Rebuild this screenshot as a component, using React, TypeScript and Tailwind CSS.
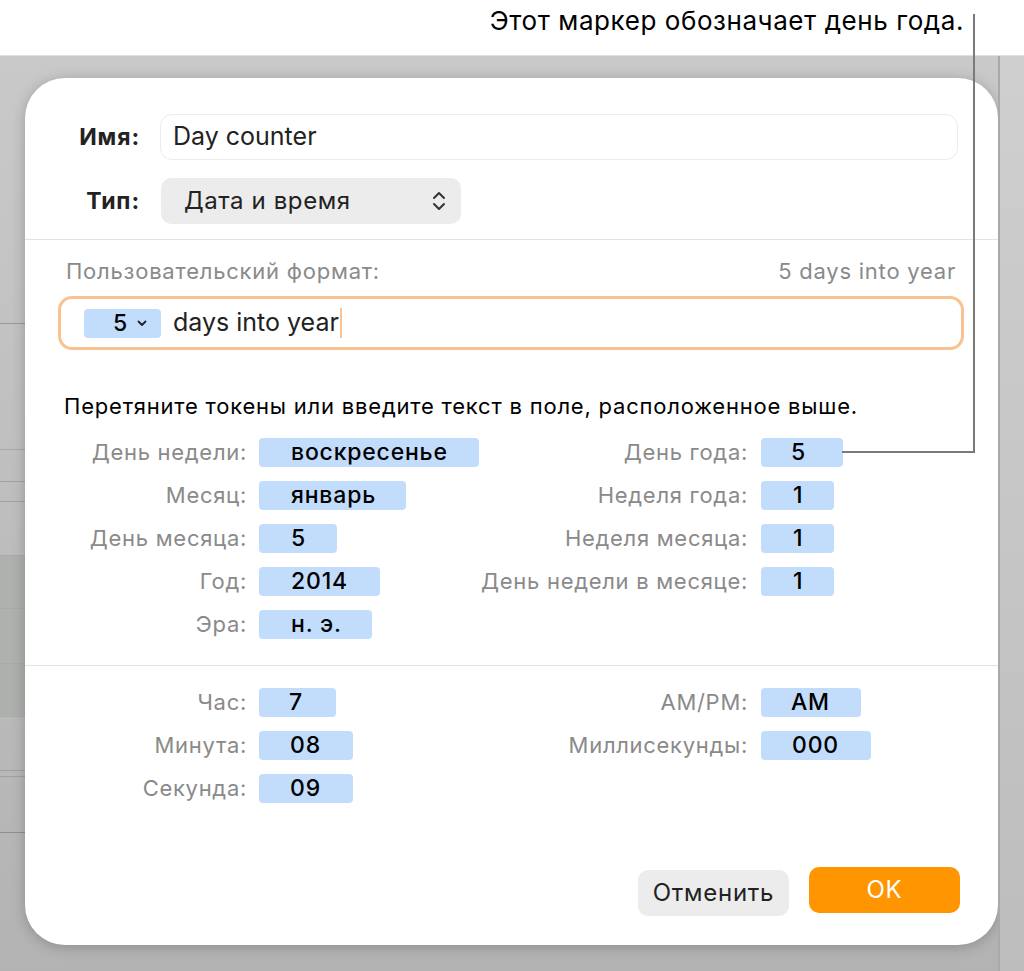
import React from 'react';

const font = { fontFamily: 'Inter, "Noto Sans", sans-serif' };

const Token = ({ text, w, pl = 'pl-[32px]' }: { text: string; w: string; pl?: string }) => (
  <div className={`h-[29px] ${w} ${pl} bg-[#c2ddfc] rounded-[4px] flex items-center text-[23px] tracking-[0.035em] text-black font-medium`}>
    {text}
  </div>
);

type Cell = { label: string; value: string; w: string; pl?: string } | null;

const Row = ({ left, right }: { left: Cell; right: Cell }) => (
  <div className="flex items-center h-[29px]">
    <div className="w-[222px] text-right text-[22px] tracking-[0.032em] text-[#8a8a8a] whitespace-nowrap">{left?.label}</div>
    <div className="w-[233px] pl-[12px]">{left && <Token text={left.value} w={left.w} pl={left.pl} />}</div>
    <div className="w-[268px] text-right text-[22px] tracking-[0.032em] text-[#8a8a8a] whitespace-nowrap">{right?.label}</div>
    <div className="pl-[13px]">{right && <Token text={right.value} w={right.w} pl={right.pl} />}</div>
  </div>
);

const App: React.FC = () => {
  const dateRows: [Cell, Cell][] = [
    [{ label: 'День недели:', value: 'воскресенье', w: 'w-[220px]' }, { label: 'День года:', value: '5', w: 'w-[82px]', pl: 'pl-[30px]' }],
    [{ label: 'Месяц:', value: 'январь', w: 'w-[147px]' }, { label: 'Неделя года:', value: '1', w: 'w-[73px]', pl: 'pl-[32px]' }],
    [{ label: 'День месяца:', value: '5', w: 'w-[78px]' }, { label: 'Неделя месяца:', value: '1', w: 'w-[73px]', pl: 'pl-[32px]' }],
    [{ label: 'Год:', value: '2014', w: 'w-[121px]' }, { label: 'День недели в месяце:', value: '1', w: 'w-[73px]', pl: 'pl-[32px]' }],
    [{ label: 'Эра:', value: 'н. э.', w: 'w-[113px]' }, null],
  ];
  const timeRows: [Cell, Cell][] = [
    [{ label: 'Час:', value: '7', w: 'w-[77px]', pl: 'pl-[30px]' }, { label: 'AM/PM:', value: 'AM', w: 'w-[100px]', pl: 'pl-[30px]' }],
    [{ label: 'Минута:', value: '08', w: 'w-[94px]', pl: 'pl-[31px]' }, { label: 'Миллисекунды:', value: '000', w: 'w-[110px]', pl: 'pl-[31px]' }],
    [{ label: 'Секунда:', value: '09', w: 'w-[94px]', pl: 'pl-[31px]' }, null],
  ];

  return (
    <div className="relative w-[1024px] h-[971px] overflow-hidden bg-white" style={font}>
      {/* caption */}
      <div className="h-[55px] pr-[60px] pt-[1px] text-right text-[26px] tracking-[0.022em] text-black whitespace-nowrap">
        Этот маркер обозначает день года.
      </div>

      {/* backdrop */}
      <div className="flex h-[916px] bg-gradient-to-b from-[#c9c9c9] to-[#b3b3b3] border-t border-[#e0e0e0]">
        <div className="w-[25px] flex flex-col">
          <div className="h-[268px] border-b border-[#999999]" />
          <div className="h-[126px] border-b border-[#a8a8a8]" />
          <div className="h-[32px] border-b border-[#a3a3a3]" />
          <div className="h-[20px] border-b border-[#a3a3a3]" />
          <div className="h-[54px] border-b border-[#ababab]" />
          <div className="h-[53px] border-b border-[#a9aca9] bg-[#aeb1ae]" />
          <div className="h-[55px] border-b border-[#a9aca9] bg-[#aeb1ae]" />
          <div className="h-[53px] border-b border-[#a9aca9] bg-[#adb0ad]" />
          <div className="h-[54px] border-b border-[#a0a0a0]" />
          <div className="h-[6px] border-b border-[#a0a0a0]" />
          <div className="h-[56px] border-b border-[#8f8f8f]" />
        </div>

        <div className="w-[973px] pt-[22px]">
          <div className="h-[867px] bg-white rounded-[40px] shadow-[0_2px_14px_rgba(0,0,0,0.22)] flex flex-col">
            {/* name / type */}
            <div className="pt-[36px] pr-[40px] flex flex-col gap-[18px]">
              <div className="flex items-center">
                <div className="w-[115px] text-right text-[23px] tracking-[0.04em] font-bold text-[#222]">Имя:</div>
                <div className="ml-[20px] flex-1 h-[46px] rounded-[12px] border border-[#ebebeb] pl-[12px] flex items-center text-[25px] text-[#222]">
                  Day counter
                </div>
              </div>
              <div className="flex items-center">
                <div className="w-[115px] text-right text-[23px] tracking-[0.04em] font-bold text-[#222]">Тип:</div>
                <div className="ml-[21px] w-[300px] h-[46px] rounded-[10px] bg-[#ececec] pl-[23px] pr-[15px] flex items-center justify-between text-[24px] tracking-[0.025em] text-[#222]">
                  <span>Дата и время</span>
                  <svg width="14" height="20" viewBox="0 0 14 20" fill="none" stroke="#333" strokeWidth="2" strokeLinecap="round" strokeLinejoin="round">
                    <path d="M2 7l5-5 5 5M2 13l5 5 5-5" />
                  </svg>
                </div>
              </div>
            </div>

            <div className="mt-[15px] border-t border-[#e3e3e3]" />

            {/* custom format */}
            <div className="pl-[33px] pr-[34px] pt-[15px]">
              <div className="flex justify-between pl-[8px] pr-[8px] text-[22px] tracking-[0.035em] text-[#8a8a8a] whitespace-nowrap">
                <span>Пользовательский формат:</span>
                <span>5 days into year</span>
              </div>
              <div className="mt-[8px] h-[54px] rounded-[14px] border-[3px] border-[#f8c291] flex items-center pl-[23px]">
                <div className="h-[29px] w-[77px] bg-[#c2ddfc] rounded-[4px] flex items-center pl-[29px] gap-[10px] text-[23px] text-black font-medium">
                  5
                  <svg width="10" height="7" viewBox="0 0 10 7" fill="none" stroke="#222" strokeWidth="1.8" strokeLinecap="round" strokeLinejoin="round">
                    <path d="M1.5 1.5L5 5l3.5-3.5" />
                  </svg>
                </div>
                <span className="ml-[12px] text-[25px] text-[#222]">days into year</span>
                <span className="ml-[1px] w-[2px] h-[30px] bg-[#f8c291]" />
              </div>
            </div>

            <div className="pl-[39px] pt-[40px] text-[22px] tracking-[0.036em] text-black whitespace-nowrap">
              Перетяните токены или введите текст в поле, расположенное выше.
            </div>

            <div className="pt-[15px] flex flex-col gap-[14px]">
              {dateRows.map(([l, r], i) => (
                <Row key={i} left={l} right={r} />
              ))}
            </div>

            <div className="mt-[26px] border-t border-[#e3e3e3]" />

            <div className="pt-[22px] flex flex-col gap-[14px]">
              {timeRows.map(([l, r], i) => (
                <Row key={i} left={l} right={r} />
              ))}
            </div>

            <div className="mt-auto pb-[29px] pr-[38px] flex justify-end items-end gap-[20px]">
              <button className="h-[46px] w-[151px] rounded-[10px] bg-[#ececec] text-[24px] tracking-[0.03em] text-[#222]">Отменить</button>
              <button className="h-[46px] w-[151px] mb-[3px] rounded-[10px] bg-[#ff9500] text-[24px] tracking-[0.03em] text-white">OK</button>
            </div>
          </div>
        </div>

        <div className="flex-1 border-l-2 border-[#a9a9a9] bg-gradient-to-b from-[#cfcfcf] to-[#bdbdbd]" />
      </div>

      {/* callout line */}
      <div className="absolute left-[973px] top-[14px] w-[2px] h-[439px] bg-[#7a7a7a]" />
      <div className="absolute left-[842px] top-[451px] w-[133px] h-[2px] bg-[#7a7a7a]" />
    </div>
  );
};

export default App;
